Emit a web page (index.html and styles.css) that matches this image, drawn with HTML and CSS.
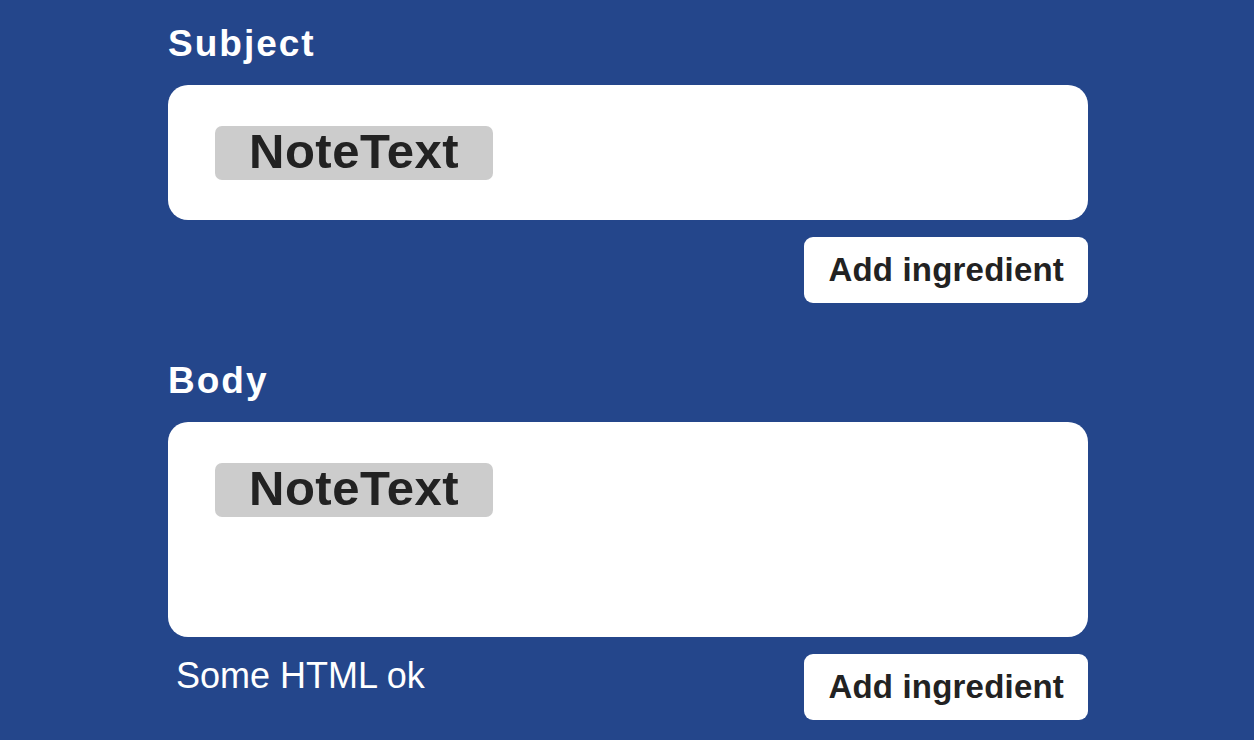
FILE: index.html
```html
<!DOCTYPE html>
<html lang="en">
<head>
<meta charset="UTF-8">
<meta name="viewport" content="width=device-width,initial-scale=1.0">
<title>Email action fields</title>
<link rel="stylesheet" href="styles.css">
</head>
<body>
<div class="wrap">
<div class="field">
<label class="field-label">Subject</label>
<div class="field-box subject">
<span class="pill">NoteText</span>
</div>
<div class="field-foot">
<span class="hint"></span>
<button class="add-btn">Add ingredient</button>
</div>
</div>
<div class="field">
<label class="field-label">Body</label>
<div class="field-box body-box">
<span class="pill">NoteText</span>
</div>
<div class="field-foot">
<span class="hint">Some HTML ok</span>
<button class="add-btn">Add ingredient</button>
</div>
</div>
</div>
</body>
</html>
```

FILE: styles.css
```css
body{
margin:0;
background-color:#24468b;
font-family:"Liberation Sans",Arial,sans-serif;
height:100vh;
overflow:hidden;
}
.wrap{
width:920px;
margin-left:168px;
padding-top:22px;
}
.field{
margin-bottom:56px;
}
.field:last-child{
margin-bottom:0;
}
.field-label{
display:block;
color:#fff;
font-size:37px;
font-weight:bold;
letter-spacing:2px;
line-height:44px;
margin-bottom:19px;
}
.field-box{
background:#fff;
border-radius:20px;
padding:41px 47px 0;
box-sizing:border-box;
}
.subject{
height:135px;
}
.body-box{
height:215px;
}
.pill{
display:inline-block;
background:#ccc;
color:#222;
border-radius:7px;
padding:0 34px 4px;
height:50px;
line-height:50px;
font-size:49px;
font-weight:bold;
letter-spacing:0.5px;
}
.field-foot{
display:flex;
justify-content:space-between;
align-items:flex-start;
margin-top:17px;
}
.hint{
color:#fff;
font-size:36px;
line-height:44px;
padding-left:8px;
}
.add-btn{
background:#fff;
color:#222;
border:none;
border-radius:9px;
height:66px;
padding:0 24px;
font-family:"Liberation Sans",Arial,sans-serif;
font-size:33px;
font-weight:bold;
letter-spacing:0.2px;
line-height:66px;
cursor:pointer;
}
```
